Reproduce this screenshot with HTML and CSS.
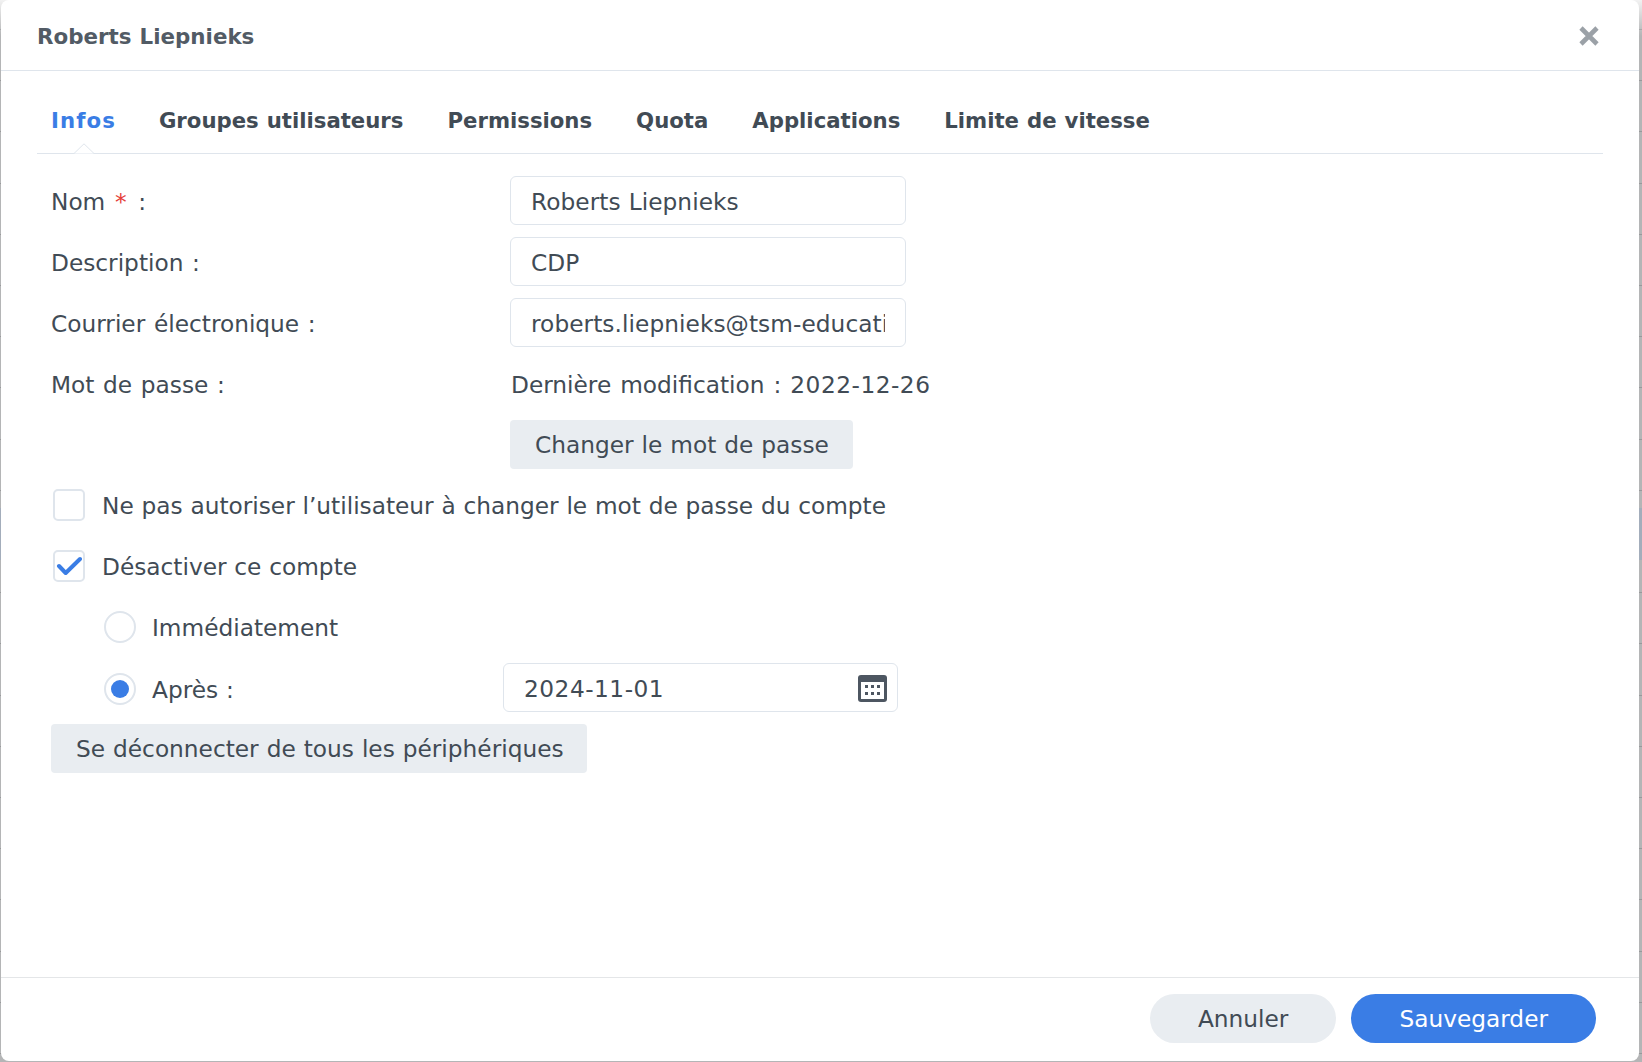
FILE: index.html
```html
<!DOCTYPE html>
<html lang="fr">
<head>
<meta charset="utf-8">
<title>Roberts Liepnieks</title>
<link rel="stylesheet" href="styles.css">
</head>
<body>
<div class="dialog">
  <header class="head">
    <h1 class="title">Roberts Liepnieks</h1>
    <svg class="close" width="20" height="20" viewBox="0 0 20 20"><path d="M2 2L18 18M18 2L2 18" stroke="#9ba1a7" stroke-width="4.6" fill="none"/></svg>
  </header>
  <nav class="tabs">
    <span class="tab active">Infos</span>
    <span class="tab">Groupes utilisateurs</span>
    <span class="tab">Permissions</span>
    <span class="tab">Quota</span>
    <span class="tab">Applications</span>
    <span class="tab">Limite de vitesse</span>
    <svg class="caret" width="22" height="11" viewBox="0 0 22 11"><path d="M0 10.5H1L11 0.8L21 10.5H22" fill="#fff" stroke="#dfe5ec"/></svg>
  </nav>
  <main class="form">
    <div class="row"><label class="label text">Nom <span class="req">*</span> :</label><input class="field" type="text" value="Roberts Liepnieks" readonly></div>
    <div class="row"><label class="label text">Description :</label><input class="field" type="text" value="CDP" readonly></div>
    <div class="row"><label class="label text">Courrier électronique :</label><input class="field" type="text" value="roberts.liepnieks@tsm-education.fr" readonly></div>
    <div class="row"><span class="label text">Mot de passe :</span><span class="text modified">Dernière modification : <span class="digits">2022-12-26</span></span></div>
    <div class="row"><span class="label"></span><button class="btn change">Changer le mot de passe</button></div>
    <div class="row check-row"><span class="box"></span><span class="option">Ne pas autoriser l’utilisateur à changer le mot de passe du compte</span></div>
    <div class="row check-row"><span class="box"><svg class="tick" width="27" height="20" viewBox="0 0 27 20"><path d="M4 10L10.7 17L25 3" stroke="#3a7de5" stroke-width="4" stroke-linecap="round" stroke-linejoin="round" fill="none"/></svg></span><span class="option">Désactiver ce compte</span></div>
    <div class="row radio-row"><span class="radio"></span><span class="option">Immédiatement</span></div>
    <div class="row radio-row date-row">
      <span class="radio on"></span><span class="after text">Après :</span>
      <div class="date"><input class="field date-field" type="text" value="2024-11-01" readonly>
        <svg class="cal" width="29" height="27" viewBox="0 0 29 27"><rect width="29" height="27" rx="3" fill="#4d5661"/><rect x="3" y="7" width="23" height="17" fill="#fff"/><g fill="#4d5661"><rect x="7" y="10" width="3" height="3"/><rect x="13" y="10" width="3" height="3"/><rect x="19" y="10" width="3" height="3"/><rect x="7" y="17" width="3" height="3"/><rect x="13" y="17" width="3" height="3"/><rect x="19" y="17" width="3" height="3"/></g></svg>
      </div>
    </div>
    <div class="row logout"><button class="btn">Se déconnecter de tous les périphériques</button></div>
  </main>
  <footer class="foot">
    <button class="pill">Annuler</button>
    <button class="pill primary">Sauvegarder</button>
  </footer>
</div>
</body>
</html>
```
FILE: styles.css
```css
* { box-sizing: border-box; }
html, body { margin: 0; height: 100%; }
body {
  background:
    linear-gradient(#f2f2f2, rgba(242, 242, 242, 0) 36px),
    linear-gradient(transparent 508px, #a3adbb 508px, #a3adbb 560px, transparent 560px),
    repeating-linear-gradient(transparent 0, transparent 29px, #98999b 29px, #98999b 30px, transparent 30px, transparent 51.2px),
    #b4b5b6;
  padding: 0 3px 1px 1px;
  font-family: "DejaVu Sans", sans-serif;
  font-size: 23.25px;
  word-spacing: 0.6px;
  color: #414b55;
  overflow: hidden;
}
.dialog {
  height: 1061px;
  background: #fff;
  border-radius: 8px;
  display: flex;
  flex-direction: column;
}
.head {
  height: 71px;
  flex: none;
  border-bottom: 1px solid #dfe5ec;
  display: flex;
  align-items: center;
  justify-content: space-between;
  padding: 2px 40px 0 36px;
}
.title { margin: 0; font-size: 21.4px; font-weight: 700; color: #525b65; }
.tabs {
  position: relative;
  margin: 0 36px;
  height: 83px;
  flex: none;
  padding: 31px 0 0 14px;
  border-bottom: 1px solid #dfe5ec;
  display: flex;
  gap: 44px;
  font-size: 21.22px;
  font-weight: 700;
  color: #414b55;
  line-height: 38px;
}
.tab.active { color: #3a7de5; letter-spacing: 1.1px; margin-right: -1px; }
.caret { position: absolute; left: 36px; bottom: -1px; }
.form {
  flex: 1;
  padding: 22px 0 0 50px;
  display: flex;
  flex-direction: column;
  gap: 12px;
}
.row { height: 49px; display: flex; align-items: center; white-space: nowrap; }
.text { padding-top: 2px; }
.option { word-spacing: 0.4px; }
.label { width: 459px; flex: none; word-spacing: 1.3px; }
.modified { word-spacing: 1.6px; padding-left: 1px; }
.req { color: #e5403a; margin: 0 3px 0 1px; }
.digits { letter-spacing: 0.5px; }
.field {
  width: 396px;
  height: 49px;
  border: 1px solid #dfe5ec;
  border-radius: 6px;
  padding: 2px 20px 0;
  font: inherit;
  word-spacing: inherit;
  letter-spacing: 0.06px;
  color: inherit;
  background: #fff;
  outline: none;
}
.date-field { width: 395px; letter-spacing: 0.5px; }
.btn {
  height: 49px;
  border: 0;
  border-radius: 4px;
  background: #e9edf1;
  padding: 0 23px 0 25px;
  font: inherit;
  word-spacing: inherit;
  color: inherit;
}
.btn.change { padding-right: 24px; }
.check-row { padding-left: 2px; }
.box {
  position: relative;
  width: 32px;
  height: 32px;
  flex: none;
  margin: 0 17px 1px 0;
  border: 2px solid #dfe5ec;
  border-radius: 5px;
}
.tick { position: absolute; left: 0; top: 4px; }
.radio-row { padding-left: 53px; }
.radio {
  width: 32px;
  height: 32px;
  flex: none;
  margin: 0 16px 1px 0;
  border: 2px solid #dfe5ec;
  border-radius: 50%;
}
.radio.on {
  margin: 3px 16px 0 0;
  display: flex;
  align-items: center;
  justify-content: center;
}
.radio.on::after { content: ""; width: 18px; height: 18px; border-radius: 50%; background: #3a7de5; }
.after { width: 351px; flex: none; padding-top: 3px; }
.date { position: relative; height: 49px; }
.cal { position: absolute; right: 11px; top: 12px; }
.date-row { margin-top: -1px; }
.foot {
  height: 84px;
  flex: none;
  border-top: 1px solid #e4e6e8;
  display: flex;
  justify-content: flex-end;
  align-items: flex-start;
  gap: 15px;
  padding: 16px 43px 0 0;
}
.pill {
  height: 49px;
  border: 0;
  border-radius: 25px;
  padding: 0 48px;
  font: inherit;
  word-spacing: inherit;
  color: inherit;
  background: #e9edf1;
}
.pill.primary { background: #3a7de5; color: #fff; }
```
